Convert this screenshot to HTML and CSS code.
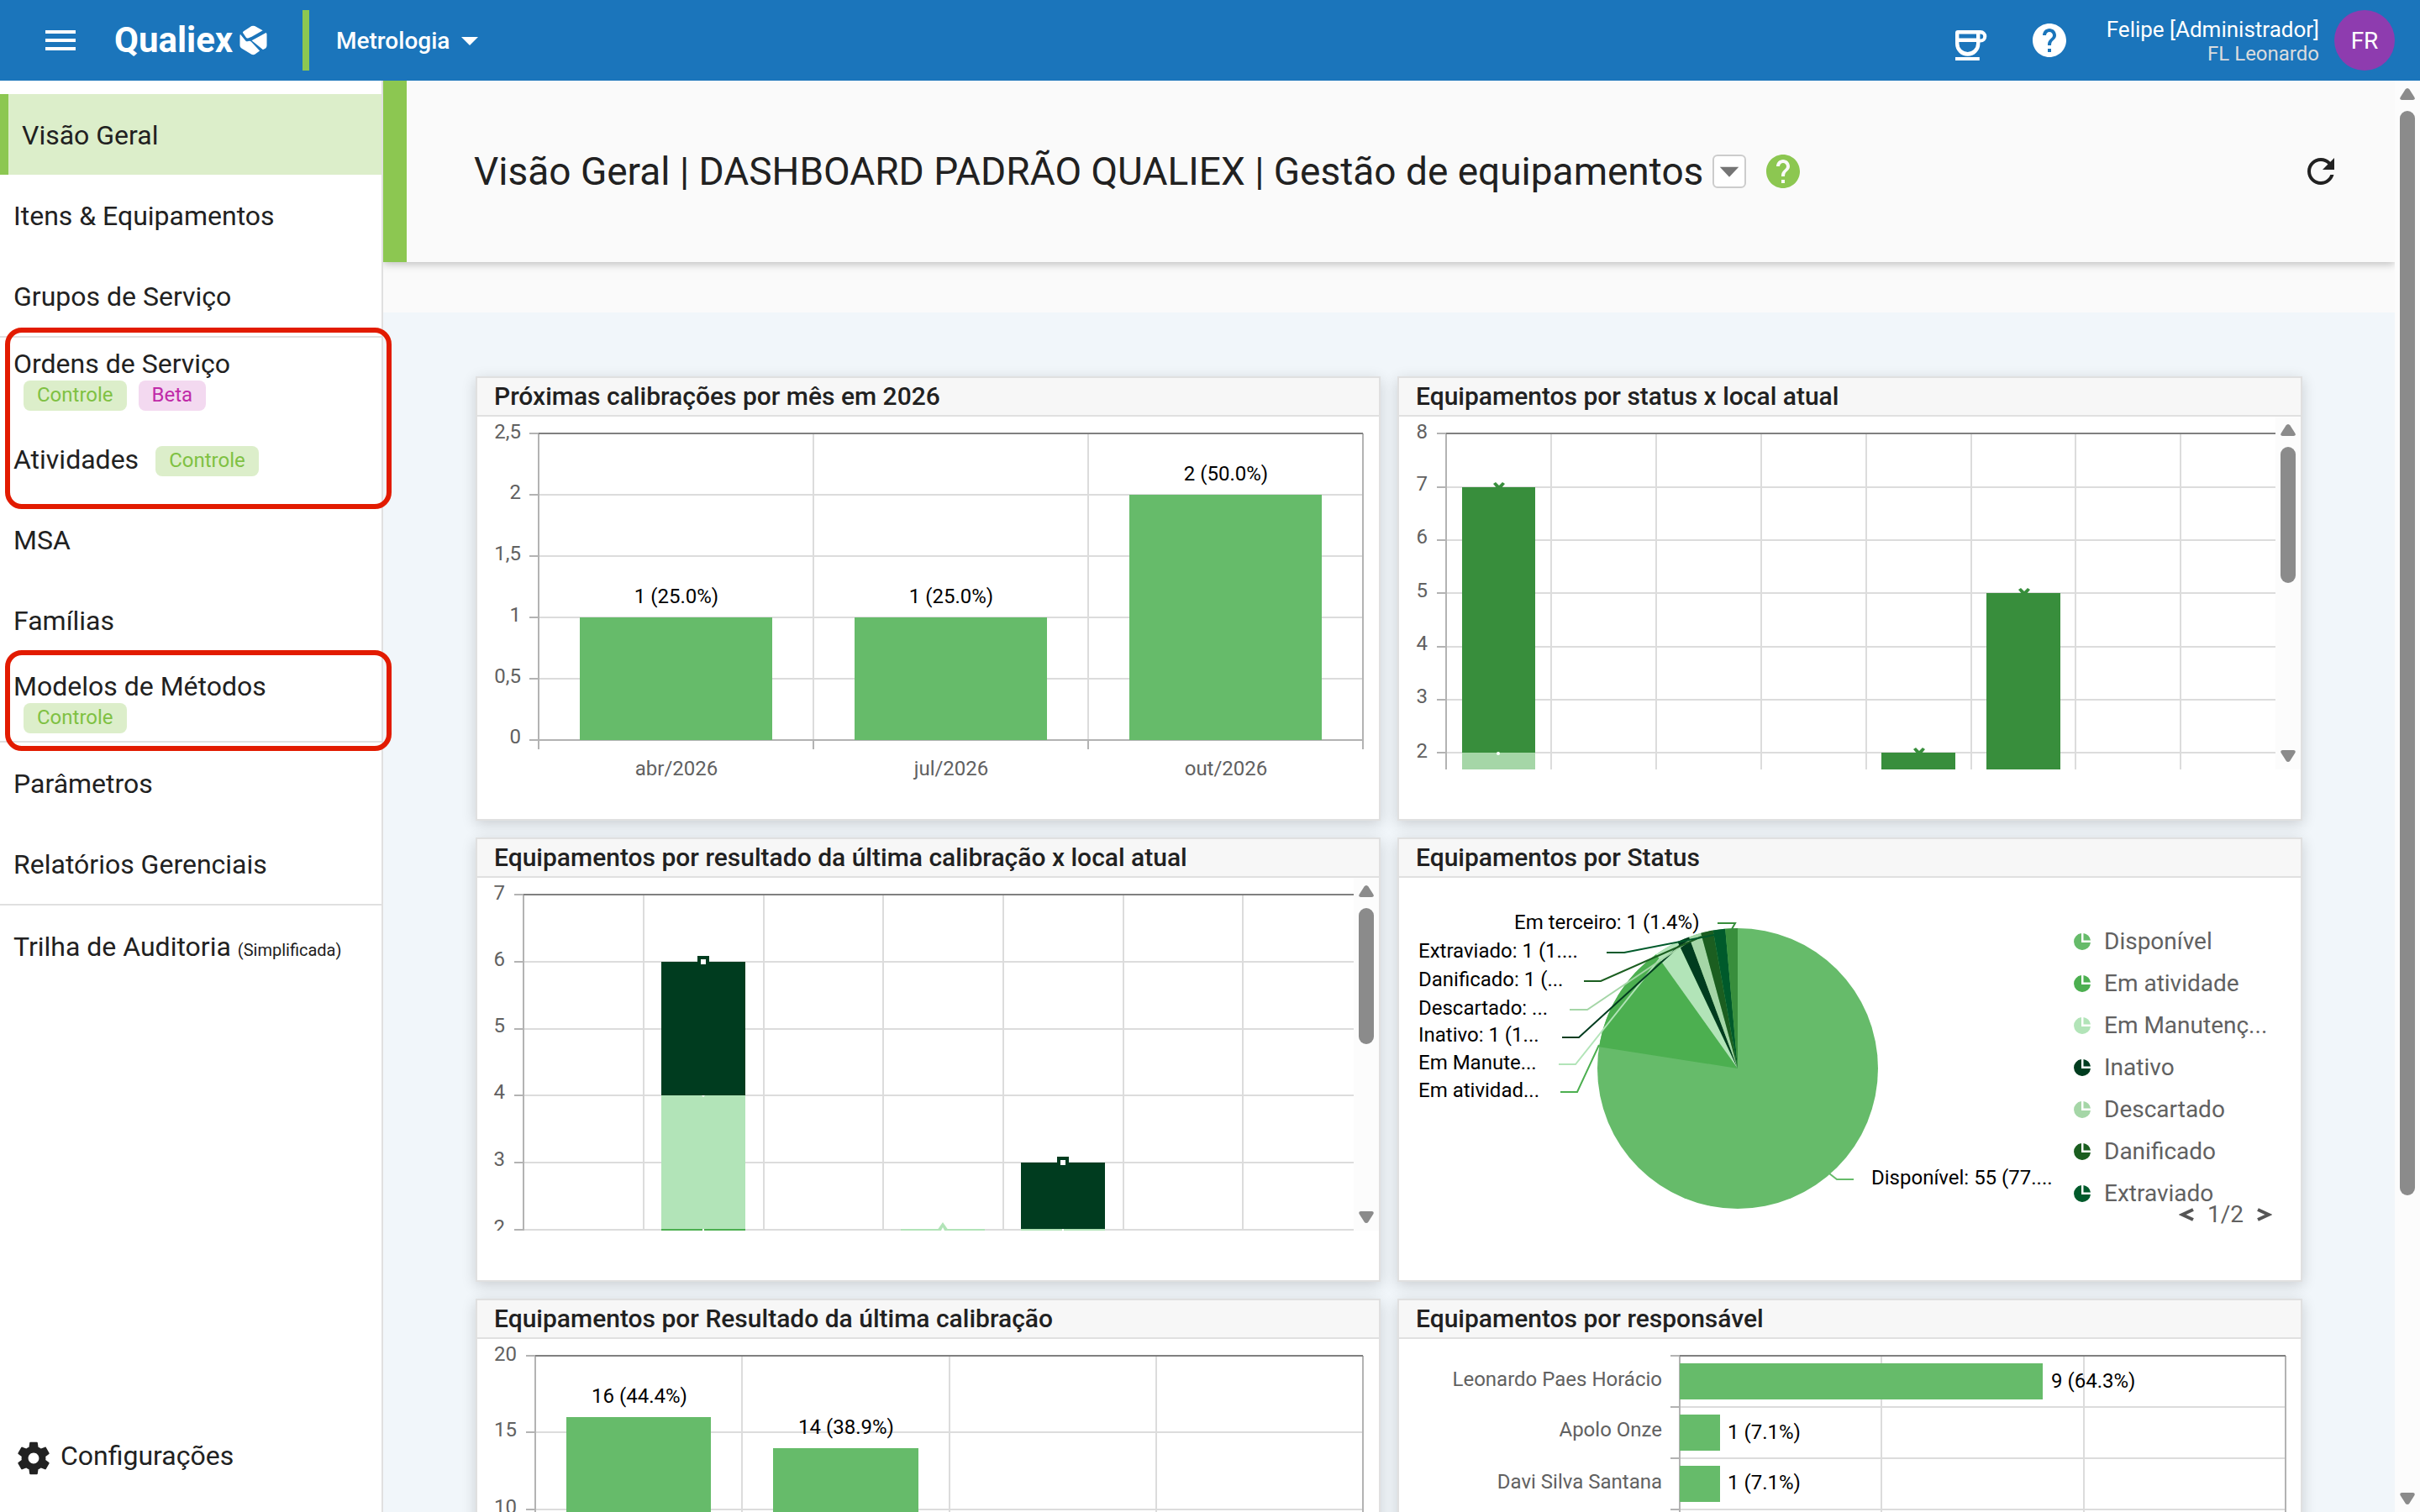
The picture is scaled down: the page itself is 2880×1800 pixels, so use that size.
FILE: index.html
```html
<!DOCTYPE html>
<html lang="pt-BR">
<head>
<meta charset="utf-8">
<title>Qualiex | Metrologia</title>
<link rel="stylesheet" href="styles.css">
</head>
<body>
<svg class="sprite" aria-hidden="true">
  <symbol id="i-help" viewBox="0 0 24 24"><path d="M12 2C6.48 2 2 6.48 2 12s4.48 10 10 10 10-4.480 10-10S17.520 2 12 2zm1 17h-2v-2h2v2zm2.070-7.750-.9.920C13.450 12.900 13 13.500 13 15h-2v-.5c0-1.100.450-2.100 1.170-2.830l1.240-1.260c.370-.360.590-.860.590-1.410 0-1.100-.9-2-2-2s-2 .9-2 2H8c0-2.210 1.790-4 4-4s4 1.790 4 4c0 .880-.360 1.680-.930 2.250z"/></symbol>
  <symbol id="i-drop" viewBox="0 0 24 24"><path d="M7 10l5 5 5-5z"/></symbol>
  <symbol id="i-up" viewBox="0 0 18 14"><path d="M9 0q1.500 0 2.500 1.500L17.500 11q1 3-2 3h-13q-3 0-2-3L6.500 1.500Q7.500 0 9 0z"/></symbol>
  <symbol id="i-down" viewBox="0 0 18 14"><path d="M9 14q1.500 0 2.500-1.500L17.500 3q1-3-2-3h-13q-3 0-2 3l6 9.500Q7.500 14 9 14z"/></symbol>
  <symbol id="i-slice" viewBox="0 0 20 20"><path d="M9 0A10 10 0 1 0 20 11H9z"/><path d="M11.500 0A10 10 0 0 1 20 8.500h-8.500z"/></symbol>
</svg>

<header class="topbar">
  <button class="icon-btn" aria-label="Menu"><svg class="icon" viewBox="0 0 24 24"><path d="M3 18h18v-2H3v2zm0-5h18v-2H3v2zm0-7v2h18V6H3z"/></svg></button>
  <a class="logo" href="#"><span>Qualiex</span><svg class="logo-mark" viewBox="0 0 34 36"><path d="M5 6.800 14.800.6q2-1 4 0L28.500 6 15 13.500l-4.500 1.800q-1.500.5-2.500-.8L4.300 9q-.8-1.300.7-2.200z"/><path d="M1 10.500l6.500 8q1 1.200 2.500.8l2-.6q1.500 0 2.500 1.200L24.800 31l-6 4.200q-2 1-4 0L2.500 27.800Q.5 26.500.5 24.500V12z"/><path d="M15 18.300 32.500 8.800q1 .5 1 2V24.500q0 2-1.500 3.200l-2.500 1.500q-.8.3-1.500-.5z"/></svg></a>
  <span class="rule"></span>
  <button class="module-btn">Metrologia<svg class="icon" viewBox="0 0 24 24"><use href="#i-drop"/></svg></button>
  <div class="topbar-end">
    <button class="icon-btn" aria-label="Pausa"><svg class="icon" viewBox="0 0 24 24"><path fill-rule="evenodd" d="M4.500 6h13.500a3.600 3.600 0 0 1 0 7.300h-.3v.7a7 7 0 0 1-14.700 0V7.500Q3 6 4.500 6zM5.200 8.200v2.500h10.300V8.200zM5.200 13v1a5.150 5 0 0 0 10.300 0v-1zM17.700 8.200v3h.4a1.500 1.500 0 0 0 0-3zM3 22h14.400v2H3z"/></svg></button>
    <button class="icon-btn" aria-label="Ajuda"><svg class="icon"><use href="#i-help"/></svg></button>
    <div class="user"><span class="user-name">Felipe [Administrador]</span><span class="user-org">FL Leonardo</span></div>
    <button class="avatar">FR</button>
  </div>
</header>

<div class="shell">
  <nav class="sidebar">
    <ul class="menu">
      <li><a class="item active" href="#">Visão Geral</a></li>
      <li><a class="item" href="#">Itens &amp; Equipamentos</a></li>
      <li><a class="item" href="#">Grupos de Serviço</a></li>
    </ul>
    <ul class="menu divided">
      <li class="marked">
        <ul class="menu">
          <li><a class="item stacked" href="#"><span>Ordens de Serviço</span><span class="badges"><span class="badge">Controle</span><span class="badge beta">Beta</span></span></a></li>
          <li><a class="item" href="#">Atividades<span class="badge inline">Controle</span></a></li>
        </ul>
      </li>
      <li><a class="item" href="#">MSA</a></li>
      <li><a class="item" href="#">Famílias</a></li>
      <li class="marked"><a class="item stacked" href="#"><span>Modelos de Métodos</span><span class="badges"><span class="badge">Controle</span></span></a></li>
    </ul>
    <ul class="menu divided">
      <li><a class="item" href="#">Parâmetros</a></li>
      <li><a class="item" href="#">Relatórios Gerenciais</a></li>
    </ul>
    <ul class="menu divided">
      <li><a class="item" href="#"><span>Trilha de Auditoria <small>(Simplificada)</small></span></a></li>
    </ul>
    <a class="item settings" href="#"><svg class="icon" viewBox="0 0 24 24"><path d="M19.140 12.940c.040-.3.060-.610.060-.940 0-.320-.020-.640-.070-.940l2.030-1.580c.180-.140.230-.410.120-.610l-1.920-3.320c-.120-.220-.370-.290-.590-.220l-2.390.960c-.5-.380-1.030-.7-1.620-.940l-.360-2.540c-.040-.240-.240-.410-.480-.410h-3.840c-.240 0-.430.170-.470.410l-.360 2.540c-.590.240-1.130.570-1.620.940l-2.390-.960c-.220-.080-.470 0-.590.220L2.740 8.870c-.120.210-.080.470.120.610l2.030 1.580c-.050.3-.090.630-.090.940s.020.640.070.940l-2.030 1.580c-.180.140-.230.410-.120.610l1.920 3.320c.120.220.370.290.590.220l2.390-.960c.5.380 1.030.7 1.620.940l.360 2.540c.050.240.240.410.480.410h3.840c.240 0 .440-.170.470-.410l.360-2.540c.590-.240 1.130-.560 1.620-.940l2.390.960c.220.080.470 0 .590-.220l1.920-3.320c.120-.220.070-.470-.120-.610l-2.010-1.580zM12 15.200c-1.760 0-3.200-1.440-3.200-3.200s1.440-3.200 3.200-3.200 3.200 1.440 3.200 3.200-1.440 3.200-3.200 3.200z"/></svg><span>Configurações</span></a>
  </nav>

  <main class="content">
    <div class="page-head">
      <h1>Visão Geral | DASHBOARD PADRÃO QUALIEX | Gestão de equipamentos</h1>
      <button class="picker" aria-label="Escolher dashboard"><svg class="icon" viewBox="0 0 24 24"><path d="M4.500 8.500h15L12 16.500z"/></svg></button>
      <button class="icon-btn help" aria-label="Ajuda"><svg class="icon"><use href="#i-help"/></svg></button>
      <button class="icon-btn refresh" aria-label="Atualizar"><svg class="icon" viewBox="0 0 24 24"><path d="M17.650 6.350C16.200 4.900 14.210 4 12 4c-4.420 0-7.990 3.580-7.990 8s3.570 8 7.990 8c3.730 0 6.840-2.550 7.730-6h-2.080c-.820 2.330-3.040 4-5.650 4-3.310 0-6-2.690-6-6s2.690-6 6-6c1.660 0 3.140.690 4.220 1.780L13 11h7V4l-2.350 2.350z"/></svg></button>
    </div>

    <div class="board">
      <section class="card">
        <h2>Próximas calibrações por mês em 2026</h2>
        <svg class="chart" viewBox="0 0 1073 481">
          <path class="grid" d="M73 93H1054M73 166H1054M73 239H1054M73 312H1054M400 20V385M727 20V385"/>
          <path class="axis" d="M62 20H73M62 93H73M62 166H73M62 239H73M62 312H73M62 385H1054M73 20V396M400 385V396M727 385V396M1054 20V396"/>
          <path class="edge" d="M73 20H1054"/>
          <g class="c-main"><rect x="122" y="239" width="229" height="146"/><rect x="449" y="239" width="229" height="146"/><rect x="776" y="93" width="229" height="292"/></g>
          <g class="tick end"><text x="52" y="26">2,5</text><text x="52" y="98">2</text><text x="52" y="171">1,5</text><text x="52" y="244">1</text><text x="52" y="317">0,5</text><text x="52" y="389">0</text></g>
          <g class="tick mid"><text x="237" y="427">abr/2026</text><text x="564" y="427">jul/2026</text><text x="891" y="427">out/2026</text></g>
          <g class="value mid"><text x="237" y="222">1 (25.0%)</text><text x="564" y="222">1 (25.0%)</text><text x="891" y="76">2 (50.0%)</text></g>
        </svg>
      </section>

      <section class="card">
        <h2>Equipamentos por status x local atual</h2>
        <div class="scroller">
          <svg class="chart" viewBox="0 0 1043 420">
            <path class="grid" d="M56 84H1043M56 147H1043M56 210H1043M56 274H1043M56 337H1043M56 400H1043M181 20V420M306 20V420M431 20V420M556 20V420M681 20V420M805 20V420M930 20V420"/>
            <path class="axis" d="M45 20H56M45 84H56M45 147H56M45 210H56M45 274H56M45 337H56M45 400H56M56 20V420"/>
            <path class="edge" d="M56 20H1043"/>
            <g class="c-third"><rect x="75" y="84" width="87" height="316"/><rect x="574" y="400" width="88" height="20"/><rect x="699" y="210" width="88" height="210"/>
              <path d="M112 80l3-2 4 4 4-4 3 2-5 6h-4zM612 396l3-2 4 4 4-4 3 2-5 6h-4zM737 206l3-2 4 4 4-4 3 2-5 6h-4z"/></g>
            <rect class="c-disc" x="75" y="400" width="87" height="20"/>
            <circle class="c-white" cx="118" cy="401" r="2"/>
            <g class="tick end"><text x="34" y="26">8</text><text x="34" y="88">7</text><text x="34" y="151">6</text><text x="34" y="215">5</text><text x="34" y="278">4</text><text x="34" y="341">3</text><text x="34" y="406">2</text></g>
          </svg>
          <div class="scrollbar"><svg class="arrow"><use href="#i-up"/></svg><span class="thumb"></span><svg class="arrow"><use href="#i-down"/></svg></div>
        </div>
      </section>

      <section class="card">
        <h2>Equipamentos por resultado da última calibração x local atual</h2>
        <div class="scroller">
          <svg class="chart" viewBox="0 0 1043 420">
            <path class="grid" d="M55 100H1043M55 180H1043M55 259H1043M55 339H1043M55 419H1043M198 20V420M341 20V420M483 20V420M626 20V420M769 20V420M911 20V420"/>
            <path class="axis" d="M44 20H55M44 100H55M44 180H55M44 259H55M44 339H55M44 419H55M55 20V420"/>
            <path class="edge" d="M55 20H1043"/>
            <g class="c-dark"><rect x="219" y="100" width="100" height="159"/><rect x="647" y="339" width="100" height="79"/><rect x="262" y="93" width="14" height="14"/><rect x="690" y="332" width="14" height="14"/></g>
            <g class="c-pale"><rect x="219" y="259" width="100" height="160"/><rect x="504" y="418" width="100" height="2"/><rect x="647" y="418" width="100" height="2"/><path d="M547 420l7-10 7 10z"/></g>
            <rect class="c-second" x="219" y="418" width="100" height="2"/>
            <g class="c-white"><rect x="266" y="97" width="6" height="6"/><rect x="694" y="336" width="6" height="6"/><path d="M552 420l2-4 2 4zM267 259h4l-2 2zM268 418h2v2h-2zM696 418h2v2h-2z"/></g>
            <g class="tick end"><text x="33" y="26">7</text><text x="33" y="105">6</text><text x="33" y="184">5</text><text x="33" y="263">4</text><text x="33" y="343">3</text><text x="33" y="424">2</text></g>
          </svg>
          <div class="scrollbar"><svg class="arrow"><use href="#i-up"/></svg><span class="thumb"></span><svg class="arrow"><use href="#i-down"/></svg></div>
        </div>
      </section>

      <section class="card">
        <h2>Equipamentos por Status</h2>
        <div class="pie-row">
          <svg class="chart" viewBox="0 0 803 460">
            <circle class="c-main" cx="403" cy="227" r="167"/>
            <path class="c-second" d="M403 227L238 201.200A167 167 0 0 1 306 91z"/>
            <path class="c-pale" d="M403 227L306 91A167 167 0 0 1 331.500 76.100z"/>
            <path class="c-dark" d="M403 227L331.500 76.100A167 167 0 0 1 345.100 70.400z"/>
            <path class="c-disc" d="M403 227L345.100 70.400A167 167 0 0 1 359.200 65.800z"/>
            <path class="c-dam" d="M403 227L359.200 65.800A167 167 0 0 1 373.600 62.600z"/>
            <path class="c-lost" d="M403 227L373.600 62.600A167 167 0 0 1 388.200 60.700z"/>
            <path class="c-third" d="M403 227L388.200 60.700A167 167 0 0 1 403 60z"/>
            <g class="leader">
              <path class="s-second" d="M192 255H212L238 199"/>
              <path class="s-pale" d="M190 222H210L320 84"/>
              <path class="s-dark" d="M194 190H214L339 76"/>
              <path class="s-disc" d="M203 157H224L353 70"/>
              <path class="s-dam" d="M220 123H240L360 70"/>
              <path class="s-lost" d="M247 89H268L380 67"/>
              <path class="s-third" d="M379 54H400L396 61"/>
              <path class="s-main" d="M541 359H521L512 352"/>
            </g>
            <g class="value"><text x="137" y="61">Em terceiro: 1 (1.4%)</text><text x="23" y="95">Extraviado: 1 (1....</text><text x="23" y="129">Danificado: 1 (...</text><text x="23" y="163">Descartado: ...</text><text x="23" y="195">Inativo: 1 (1...</text><text x="23" y="228">Em Manute...</text><text x="23" y="261">Em atividad...</text><text x="562" y="365">Disponível: 55 (77....</text></g>
          </svg>
          <div class="legend">
            <ul>
              <li><svg class="dot c-main"><use href="#i-slice"/></svg>Disponível</li>
              <li><svg class="dot c-second"><use href="#i-slice"/></svg>Em atividade</li>
              <li><svg class="dot c-pale"><use href="#i-slice"/></svg>Em Manutenç...</li>
              <li><svg class="dot c-dark"><use href="#i-slice"/></svg>Inativo</li>
              <li><svg class="dot c-disc"><use href="#i-slice"/></svg>Descartado</li>
              <li><svg class="dot c-dam"><use href="#i-slice"/></svg>Danificado</li>
              <li><svg class="dot c-lost"><use href="#i-slice"/></svg>Extraviado</li>
            </ul>
            <div class="pager"><button aria-label="Anterior"><svg viewBox="0 0 18 16"><path d="M17 2L4 8l13 6"/></svg></button><span>1/2</span><button aria-label="Próxima"><svg viewBox="0 0 18 16"><path d="M1 2l13 6-13 6"/></svg></button></div>
          </div>
        </div>
      </section>

      <section class="card">
        <h2>Equipamentos por Resultado da última calibração</h2>
        <svg class="chart" viewBox="0 0 1073 481">
          <path class="grid" d="M69 111H1054M69 203H1054M69 294H1054M315 20V385M562 20V385M808 20V385"/>
          <path class="axis" d="M58 20H69M58 111H69M58 203H69M58 294H69M58 385H1054M69 20V396M315 385V396M562 385V396M808 385V396M1054 20V396"/>
          <path class="edge" d="M69 20H1054"/>
          <g class="c-main"><rect x="106" y="93" width="172" height="292"/><rect x="352" y="130" width="173" height="255"/></g>
          <g class="tick end"><text x="47" y="26">20</text><text x="47" y="116">15</text><text x="47" y="208">10</text><text x="47" y="299">5</text><text x="47" y="389">0</text></g>
          <g class="value mid"><text x="193" y="76">16 (44.4%)</text><text x="439" y="113">14 (38.9%)</text></g>
        </svg>
      </section>

      <section class="card">
        <h2>Equipamentos por responsável</h2>
        <svg class="chart" viewBox="0 0 1073 481">
          <path class="grid" d="M334 81H1055M334 142H1055M334 203H1055M334 264H1055M574 20V385M815 20V385"/>
          <path class="axis" d="M323 20H334M323 81H334M323 142H334M323 203H334M323 264H334M334 20V396M1055 20V396M334 385H1055"/>
          <path class="edge" d="M334 20H1055"/>
          <g class="c-main"><rect x="334" y="29" width="432" height="43"/><rect x="334" y="90" width="48" height="43"/><rect x="334" y="151" width="48" height="43"/></g>
          <g class="tick end"><text x="313" y="56">Leonardo Paes Horácio</text><text x="313" y="116">Apolo Onze</text><text x="313" y="178">Davi Silva Santana</text></g>
          <g class="value"><text x="776" y="58">9 (64.3%)</text><text x="391" y="119">1 (7.1%)</text><text x="391" y="179">1 (7.1%)</text></g>
        </svg>
      </section>
    </div>
  </main>
  <div class="scrollbar page-scroll"><svg class="arrow"><use href="#i-up"/></svg><span class="thumb"></span><svg class="arrow"><use href="#i-down"/></svg></div>
</div>
</body>
</html>
```

FILE: styles.css
```css
* { box-sizing: border-box; }

body {
  margin: 0;
  height: 100vh;
  display: flex;
  flex-direction: column;
  overflow: hidden;
  font-family: Roboto, sans-serif;
  font-size: 32px;
  color: #212121;
  background: #fafafa;
}

button {
  font: inherit;
  color: inherit;
  background: none;
  border: 0;
  padding: 0;
}

a { color: inherit; text-decoration: none; }
ul { list-style: none; margin: 0; padding: 0; }

.sprite { display: none; }
.icon { width: 48px; height: 48px; fill: currentColor; flex: none; display: block; }
.icon-btn { display: block; flex: none; }

/* Top bar */
.topbar {
  flex: none;
  height: 96px;
  display: flex;
  align-items: center;
  padding: 0 30px 0 48px;
  color: #fff;
  background: #1b75bb;
}

.logo { display: flex; align-items: center; justify-content: space-between; margin-left: 40px; width: 182px; font-size: 42px; font-weight: 700; line-height: 48px; }
.logo-mark { width: 33px; height: 36px; fill: currentColor; flex: none; }
.rule { width: 8px; height: 72px; margin: 0 32px 0 42px; background: #8cc751; }
.module-btn { display: flex; align-items: center; font-size: 28px; font-weight: 500; }
.topbar-end { margin-left: auto; display: flex; align-items: center; }
.topbar-end .icon-btn { margin-right: 46px; }
.user { display: flex; flex-direction: column; align-items: flex-end; margin: 2px 18px 0 -2px; }
.user-name { font-size: 26px; line-height: 30px; }
.user-org { font-size: 24px; line-height: 28px; color: #d9dcde; }
.avatar { width: 72px; height: 72px; border-radius: 50%; background: #8e3caf; font-size: 28px; }

/* Sidebar */
.shell { flex: 1; min-height: 0; display: flex; }

.sidebar {
  flex: none;
  width: 456px;
  display: flex;
  flex-direction: column;
  padding: 16px 0;
  background: #fff;
  border-right: 2px solid #e0e0e0;
  position: relative;
  z-index: 1;
}

.divided { border-top: 2px solid #e0e0e0; }
.item { height: 96px; display: flex; align-items: center; padding: 2px 16px 0; }
.item.active { background: #dceeca; border-left: 10px solid #8cc751; }
.item.stacked { flex-direction: column; align-items: flex-start; gap: 2px; padding-top: 13px; line-height: 36px; }
.item small { font-size: 20px; }
.badges { display: flex; gap: 14px; padding-left: 12px; }
.badge { height: 36px; padding: 0 16px; border-radius: 8px; font-size: 24px; line-height: 34px; color: #7fc143; background: #dceeca; }
.badge.inline { margin-left: 20px; margin-top: 4px; }
.badge.beta { color: #c02aa8; background: #f3d9f0; }
.item.settings { margin-top: auto; gap: 8px; padding-top: 0; }
.settings span { padding-bottom: 6px; }

.marked { position: relative; }
.marked::after {
  content: "";
  position: absolute;
  inset: -12px -12px -12px 6px;
  border: 6px solid #e21b00;
  border-radius: 20px;
  pointer-events: none;
}

/* Content */
.content { flex: 1; min-width: 0; overflow: hidden; }

.page-head {
  height: 216px;
  display: flex;
  align-items: center;
  padding: 0 64px 0 80px;
  border-left: 28px solid #8cc751;
  background: #fafafa;
  box-shadow: 0 2px 10px rgba(0, 0, 0, .26);
}

h1 { margin: 0; font-size: 46px; font-weight: 400; line-height: 56px; }
.picker { display: flex; align-items: center; justify-content: center; width: 40px; height: 40px; margin: 0 20px 0 11px; border: 2px solid #ccc; border-radius: 6px; background: #fff; color: #757575; }
.picker .icon { width: 36px; height: 36px; }
.help { color: #8cc751; }
.refresh { margin-left: auto; }

.board {
  margin-top: 60px;
  padding: 76px 110px;
  display: grid;
  grid-template-columns: 1fr 1fr;
  grid-auto-rows: 529px;
  gap: 20px;
  background: #f1f6fa;
}

.card { min-width: 0; background: #fff; border: 2px solid #e0e0e0; box-shadow: 0 4px 16px rgba(0, 0, 0, .16); }
.card h2 { margin: 0; height: 46px; padding: 0 20px; font-size: 30px; font-weight: 500; line-height: 44px; background: #f7f7f7; border-bottom: 2px solid #e0e0e0; }

/* Charts */
.chart { display: block; width: 100%; flex: 1; min-width: 0; overflow: hidden; }
.scroller, .pie-row { display: flex; }
.grid, .axis, .edge, .leader { fill: none; stroke-width: 2; }
.grid { stroke: #dcdcdc; }
.axis { stroke: #b3b3b3; }
.edge { stroke: #808080; }
.tick, .value { font-size: 24px; }
.tick { fill: #616161; }
.value { fill: #000; }
.mid { text-anchor: middle; }
.end { text-anchor: end; }

.c-main { fill: #66bb6a; }
.c-second { fill: #4caf50; }
.c-third { fill: #388e3c; }
.c-pale { fill: #b2e4b8; }
.c-disc { fill: #a5d6a7; }
.c-dark { fill: #003c1f; }
.c-dam { fill: #1b5e20; }
.c-lost { fill: #005a2b; }
.c-white { fill: #fff; }
.s-main { stroke: #66bb6a; }
.s-second { stroke: #4caf50; }
.s-third { stroke: #388e3c; }
.s-pale { stroke: #b2e4b8; }
.s-disc { stroke: #a5d6a7; }
.s-dark { stroke: #003c1f; }
.s-dam { stroke: #1b5e20; }
.s-lost { stroke: #005a2b; }

.legend { flex: none; width: 270px; padding-top: 51px; font-size: 28px; line-height: 50px; color: #616161; }
.legend li { display: flex; align-items: center; gap: 16px; height: 50px; }
.dot { width: 20px; height: 20px; }
.pager { display: flex; align-items: center; justify-content: flex-end; gap: 16px; height: 28px; margin-top: -14px; padding-right: 34px; line-height: 28px; }
.pager svg { display: block; width: 18px; height: 16px; fill: none; stroke: #555; stroke-width: 4; }

/* Scroll bars */
.scrollbar { flex: none; width: 30px; display: flex; flex-direction: column; align-items: center; gap: 13px; padding: 9px 0; background: #fcfcfc; }
.scrollbar .arrow { width: 18px; height: 14px; fill: #8b8b8b; }
.scrollbar .arrow:last-child { margin-top: auto; }
.thumb { width: 18px; height: 162px; border-radius: 9px; background: #8b8b8b; }
.page-scroll .thumb { height: calc(76% + 10px); }
```
